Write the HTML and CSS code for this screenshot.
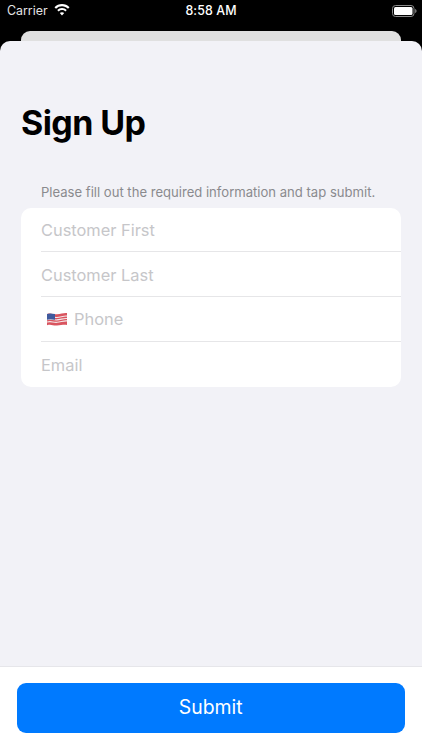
FILE: index.html
```html
<!DOCTYPE html>
<html lang="en">
<head>
<meta charset="utf-8">
<title>Sign Up</title>
<link rel="stylesheet" href="styles.css">
</head>
<body>
<div class="screen">
  <div class="status">
    <div class="status-left">
      <span>Carrier</span>
      <svg class="wifi" viewBox="0 0 16 12" width="16" height="12"><path fill="#fff" d="M8 2.300c2.300 0 4.400.9 6 2.400l1.500-1.500A10.700 10.700 0 0 0 8 0 10.700 10.700 0 0 0 .5 3.200L2 4.700a8.700 8.700 0 0 1 6-2.400zm0 3.800c1.300 0 2.400.5 3.300 1.300l1.500-1.500A6.900 6.900 0 0 0 8 4a6.900 6.900 0 0 0-4.800 1.900l1.500 1.500A4.800 4.800 0 0 1 8 6.100zm0 2.100c-.9 0-1.600.3-2.200.9L8 11.500l2.200-2.400c-.6-.6-1.300-.9-2.200-.9z"/></svg>
    </div>
    <div class="status-time">8:58 AM</div>
    <svg class="battery" viewBox="0 0 25 12" width="25" height="12"><rect x=".5" y=".5" width="21.500" height="11" rx="3" fill="none" stroke="#8a8a8a"/><rect x="2" y="2" width="18.500" height="8" rx="1.500" fill="#fff"/><path d="M23.200 4v4c.8-.3 1.300-1.100 1.300-2s-.5-1.700-1.300-2z" fill="#8a8a8a"/></svg>
  </div>
  <div class="peek"></div>
  <main class="sheet">
    <div class="content">
      <h1 class="title">Sign Up</h1>
      <p class="hint">Please fill out the required information and tap submit.</p>
      <div class="list">
        <div class="row"><span class="placeholder">Customer First</span></div>
        <div class="row"><span class="placeholder">Customer Last</span></div>
        <div class="row">
          <svg class="flag" viewBox="0 0 20 15" width="20" height="15">
            <path fill="#d9545f" d="M0 2c4-1.500 6 .6 10 .2S17 .6 20 1v12c-3-.4-6 .1-10 .5s-6-1.700-10-.2z"/>
            <path fill="none" stroke="#f4e9ea" stroke-width="1.100" d="M0 5.300c4-1.500 6 .6 10 .2s7-1.800 10-1.400M0 7.700c4-1.500 6 .6 10 .2s7-1.800 10-1.400M0 10.100c4-1.500 6 .6 10 .2s7-1.800 10-1.400"/>
            <path fill="#3f5a9e" d="M0 2c3-1.100 5-.4 8 0v5.800c-3-.4-5-1.100-8 0z"/>
          </svg>
          <span class="placeholder">Phone</span>
        </div>
        <div class="row"><span class="placeholder">Email</span></div>
      </div>
    </div>
    <div class="footer">
      <button class="submit" type="button">Submit</button>
    </div>
  </main>
</div>
</body>
</html>
```
FILE: styles.css
```css
* { box-sizing: border-box; }
html, body { margin: 0; height: 100%; }
body { font-family: Inter, "Liberation Sans", sans-serif; background: #000; }
.screen { width: 422px; height: 750px; display: flex; flex-direction: column; overflow: hidden; background: #000; }
.status { height: 31px; flex: none; display: grid; grid-template-columns: 1fr auto 1fr; align-items: start; padding: 2px 7px 0 7px; color: #fff; font-size: 12.400px; line-height: 18px; }
.status-left { display: flex; align-items: center; gap: 6px; color: #e4e4e4; }
.wifi { margin-top: -3px; }
.status-time { font-weight: 500; letter-spacing: .1px; }
.battery { justify-self: end; margin: 3px -2px 0 0; }
.peek { height: 10px; flex: none; margin: 0 21px; background: #e0e0e0; border-radius: 9px 9px 0 0; }
.sheet { flex: 1; min-height: 0; display: flex; flex-direction: column; background: #f2f2f7; border-radius: 10px 10px 0 0; }
.content { flex: 1; min-height: 0; padding: 61px 21px 0; }
.title { margin: 0; font-size: 34px; line-height: 42px; font-weight: 700; color: #000; letter-spacing: -.6px; }
.hint { margin: 39px 0 0; padding-left: 20px; font-size: 13.080px; line-height: 18px; color: #8a8a8e; }
.list { margin-top: 6.500px; background: #fff; border-radius: 10px; padding-left: 20px; }
.row { height: 44.750px; display: flex; align-items: center; padding-top: 1px; border-bottom: 1px solid #e6e6e8; font-size: 16.400px; }
.row:last-child { border-bottom: 0; }
.placeholder { color: #c6c6c9; }
.flag { margin: 0 7px 0 6px; flex: none; }
.footer { height: 84px; flex: none; background: #fff; border-top: 1px solid #e6e6ea; padding: 16px 17px 0 16.500px; }
.submit { display: block; width: 100%; height: 50px; border: 0; border-radius: 9px; background: #007aff; color: #fff; font: 400 19.400px/1 Inter, "Liberation Sans", sans-serif; padding: 0; }
```
